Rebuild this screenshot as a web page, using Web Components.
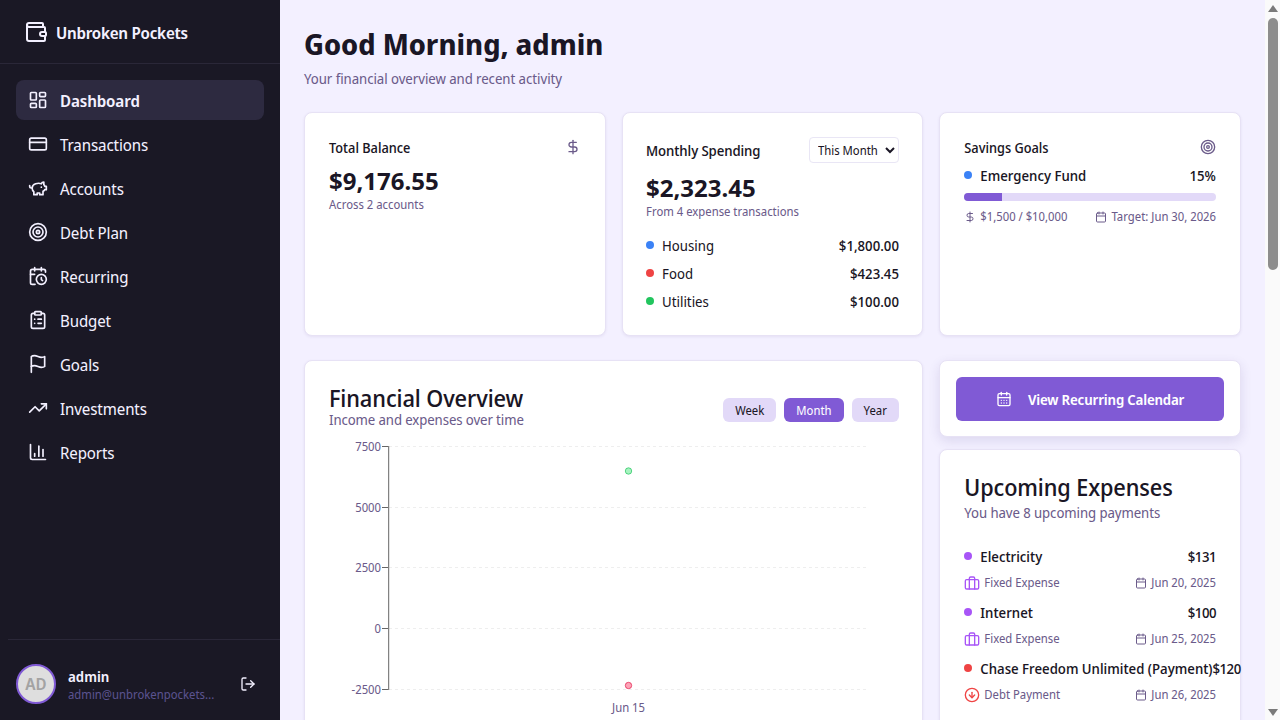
<!DOCTYPE html>
<html lang="en">
<head>
<meta charset="utf-8">
<title>Unbroken Pockets</title>
<style>
html, body { margin: 0; height: 100%; overflow: hidden; }
body { font-family: "Noto Sans Display", "Noto Sans", sans-serif; color: #1a1625; }
</style>
</head>
<body>
<app-shell>
  <side-bar slot="side">
    <nav-item icon="dashboard" active>Dashboard</nav-item>
    <nav-item icon="card">Transactions</nav-item>
    <nav-item icon="piggy">Accounts</nav-item>
    <nav-item icon="target">Debt Plan</nav-item>
    <nav-item icon="calclock">Recurring</nav-item>
    <nav-item icon="clipboard">Budget</nav-item>
    <nav-item icon="flag">Goals</nav-item>
    <nav-item icon="trend">Investments</nav-item>
    <nav-item icon="bars">Reports</nav-item>
  </side-bar>
  <dash-page>
    <balance-card slot="a"></balance-card>
    <spending-card slot="b"></spending-card>
    <savings-card slot="c"></savings-card>
    <overview-card slot="d"></overview-card>
    <calendar-card slot="e"></calendar-card>
    <upcoming-card slot="f">
      <expense-row name="Electricity" amount="$131" kind="Fixed Expense" date="Jun 20, 2025" color="#a855f7" icon="briefcase"></expense-row>
      <expense-row name="Internet" amount="$100" kind="Fixed Expense" date="Jun 25, 2025" color="#a855f7" icon="briefcase"></expense-row>
      <expense-row name="Chase Freedom Unlimited (Payment)" amount="$120" kind="Debt Payment" date="Jun 26, 2025" color="#ef4444" icon="arrowdown"></expense-row>
    </upcoming-card>
  </dash-page>
  <scroll-rail slot="rail"></scroll-rail>
</app-shell>

<script>
// lucide style icons, only the ones this page needs
const ICONS = {
  wallet: '<path d="M19 7V4a1 1 0 0 0-1-1H5a2 2 0 0 0 0 4h15a1 1 0 0 1 1 1v4h-3a2 2 0 0 0 0 4h3a1 1 0 0 0 1-1v-2a1 1 0 0 0-1-1"/><path d="M3 5v14a2 2 0 0 0 2 2h15a1 1 0 0 0 1-1v-4"/>',
  dashboard: '<rect x="3" y="3" width="7" height="9" rx="1"/><rect x="14" y="3" width="7" height="5" rx="1"/><rect x="14" y="12" width="7" height="9" rx="1"/><rect x="3" y="16" width="7" height="5" rx="1"/>',
  card: '<rect x="2" y="5" width="20" height="14" rx="2"/><path d="M2 10h20"/>',
  piggy: '<path d="M19 5c-1.5 0-2.8 1.4-3 2-3.5-1.5-11-.3-11 5 0 1.8 0 3 2 4.5V20h4v-2h3v2h4v-4c1-.5 1.7-1 2-2h2v-4h-2c0-1-.5-1.5-1-2V5z"/><path d="M2 9v1c0 1.1.9 2 2 2h1"/><path d="M16 11h.01"/>',
  target: '<circle cx="12" cy="12" r="10"/><circle cx="12" cy="12" r="6"/><circle cx="12" cy="12" r="2"/>',
  calclock: '<path d="M21 7.5V6a2 2 0 0 0-2-2H5a2 2 0 0 0-2 2v14a2 2 0 0 0 2 2h3.5"/><path d="M16 2v4"/><path d="M8 2v4"/><path d="M3 10h5"/><path d="M17.5 17.5 16 16.3V14"/><circle cx="16" cy="16" r="6"/>',
  clipboard: '<rect x="8" y="2" width="8" height="4" rx="1"/><path d="M16 4h2a2 2 0 0 1 2 2v14a2 2 0 0 1-2 2H6a2 2 0 0 1-2-2V6a2 2 0 0 1 2-2h2"/><path d="M12 11h4"/><path d="M12 16h4"/><path d="M8 11h.01"/><path d="M8 16h.01"/>',
  flag: '<path d="M4 15s1-1 4-1 5 2 8 2 4-1 4-1V3s-1 1-4 1-5-2-8-2-4 1-4 1z"/><path d="M4 22v-7"/>',
  trend: '<path d="M22 7l-8.5 8.5-5-5L2 17"/><path d="M16 7h6v6"/>',
  bars: '<path d="M3 3v16a2 2 0 0 0 2 2h16"/><path d="M18 17V9"/><path d="M13 17V5"/><path d="M8 17v-3"/>',
  logout: '<path d="M9 21H5a2 2 0 0 1-2-2V5a2 2 0 0 1 2-2h4"/><path d="M16 17l5-5-5-5"/><path d="M21 12H9"/>',
  dollar: '<path d="M12 2v20"/><path d="M17 5H9.5a3.5 3.5 0 0 0 0 7h5a3.5 3.5 0 0 1 0 7H6"/>',
  calendar: '<path d="M8 2v4"/><path d="M16 2v4"/><rect x="3" y="4" width="18" height="18" rx="2"/><path d="M3 10h18"/>',
  caldays: '<path d="M8 2v4"/><path d="M16 2v4"/><rect x="3" y="4" width="18" height="18" rx="2"/><path d="M3 10h18"/><path d="M8 14h.01"/><path d="M12 14h.01"/><path d="M16 14h.01"/><path d="M8 18h.01"/><path d="M12 18h.01"/><path d="M16 18h.01"/>',
  briefcase: '<path d="M16 21V5a2 2 0 0 0-2-2h-4a2 2 0 0 0-2 2v16"/><rect x="2" y="7" width="20" height="14" rx="2"/>',
  arrowdown: '<circle cx="12" cy="12" r="10"/><path d="M12 8v8"/><path d="M8 12l4 4 4-4"/>'
};

const FONT = '"Noto Sans Display", "Noto Sans", sans-serif';

class UiIcon extends HTMLElement {
  connectedCallback() {
    const size = this.getAttribute("size") || 20;
    const name = this.getAttribute("name");
    this.attachShadow({ mode: "open" }).innerHTML = `
      <style>:host { display: inline-flex; flex: none; width: ${size}px; height: ${size}px; } svg { display: block; }</style>
      <svg width="${size}" height="${size}" viewBox="0 0 24 24" fill="none" stroke="currentColor" stroke-width="2" stroke-linecap="round" stroke-linejoin="round">${ICONS[name]}</svg>`;
  }
}
customElements.define("ui-icon", UiIcon);

class AppShell extends HTMLElement {
  constructor() {
    super();
    this.attachShadow({ mode: "open" }).innerHTML = `
      <style>
        :host { display: flex; height: 100vh; overflow: hidden; }
        main { flex: 1; min-width: 0; overflow: hidden; background: #f3f0ff; }
      </style>
      <slot name="side"></slot>
      <main><slot></slot></main>
      <slot name="rail"></slot>`;
  }
}
customElements.define("app-shell", AppShell);

// the screenshot has the browser's scrollbar on it, headless hides the real one
class ScrollRail extends HTMLElement {
  constructor() {
    super();
    this.attachShadow({ mode: "open" }).innerHTML = `
      <style>
        :host { display: flex; flex-direction: column; align-items: center; flex: none; width: 15px; height: 100vh; background: #fafafa; }
        .arrow { flex: none; height: 16px; display: flex; align-items: center; justify-content: center; }
        .arrow svg { display: block; }
        .thumb { flex: none; width: 10px; height: 252px; margin-top: 2px; border-radius: 5px; background: #8d8d8d; }
        .gap { flex: 1; }
      </style>
      <div class="arrow"><svg width="10" height="7" viewBox="0 0 10 7"><path d="M5 0l5 7H0z" fill="#7a7a7a"/></svg></div>
      <div class="thumb"></div>
      <div class="gap"></div>
      <div class="arrow"><svg width="10" height="7" viewBox="0 0 10 7"><path d="M0 0h10L5 7z" fill="#7a7a7a"/></svg></div>`;
  }
}
customElements.define("scroll-rail", ScrollRail);

class SideBar extends HTMLElement {
  constructor() {
    super();
    this.attachShadow({ mode: "open" }).innerHTML = `
      <style>
        :host { display: flex; flex-direction: column; flex: none; width: 280px; height: 100vh; box-sizing: border-box; background: #1a1825; color: #f3f0ff; }
        .brand { display: flex; align-items: center; gap: 8px; height: 64px; box-sizing: border-box; padding: 0 24px; border-bottom: 1px solid #2a2738; font-size: 16px; font-weight: 600; letter-spacing: -.25px; flex: none; }
        .brand span { margin-top: 2px; }
        nav { flex: 1; display: flex; flex-direction: column; gap: 4px; padding: 16px; }
        .foot { margin-left: 8px; border-top: 1px solid #2a2738; height: 81px; box-sizing: border-box; padding: 8px 24px 0 8px; display: flex; align-items: center; gap: 12px; flex: none; }
        .avatar { width: 40px; height: 40px; box-sizing: border-box; border: 2px solid #805ad5; border-radius: 50%; background: #dedede; color: #a3a3a3; font-size: 16px; font-weight: 600; display: flex; align-items: center; justify-content: center; flex: none; }
        .who { flex: 1; min-width: 0; margin-top: 2px; }
        .name { font-size: 14px; font-weight: 600; line-height: 20px; color: #f3f0ff; }
        .mail { font-size: 12px; line-height: 16px; color: #5b5390; white-space: nowrap; overflow: hidden; text-overflow: ellipsis; width: 148px; }
      </style>
      <div class="brand"><ui-icon name="wallet" size="24"></ui-icon><span>Unbroken Pockets</span></div>
      <nav><slot></slot></nav>
      <div class="foot">
        <div class="avatar">AD</div>
        <div class="who"><div class="name">admin</div><div class="mail">admin@unbrokenpockets.com</div></div>
        <ui-icon name="logout" size="16"></ui-icon>
      </div>`;
  }
}
customElements.define("side-bar", SideBar);

class NavItem extends HTMLElement {
  connectedCallback() {
    this.attachShadow({ mode: "open" }).innerHTML = `
      <style>
        :host { display: flex; align-items: center; gap: 12px; box-sizing: border-box; height: 40px; padding: 2px 12px 0; border-radius: 8px; font-size: 16px; letter-spacing: -.12px; color: #f3f0ff; }
        :host([active]) { background: #2d2a40; font-weight: 600; }
        ui-icon { margin-top: -2px; }
      </style>
      <ui-icon name="${this.getAttribute("icon")}" size="20"></ui-icon><slot></slot>`;
  }
}
customElements.define("nav-item", NavItem);

class DashPage extends HTMLElement {
  constructor() {
    super();
    this.attachShadow({ mode: "open" }).innerHTML = `
      <style>
        :host { display: block; padding: 24px; }
        h1 { margin: 0; font-size: 29px; line-height: 40px; font-weight: 700; color: #1a1625; }
        p { margin: 5px 0 0; font-size: 14px; line-height: 20px; letter-spacing: -.05px; color: #6b5b8a; }
        .top { display: grid; grid-template-columns: repeat(3, minmax(0, 1fr)); gap: 16px; margin-top: 23px; height: 224px; }
        .bottom { display: grid; grid-template-columns: repeat(3, minmax(0, 1fr)); gap: 16px; margin-top: 24px; align-items: start; }
        .wide { grid-column: span 2; }
        .stack { display: flex; flex-direction: column; gap: 12px; }
      </style>
      <h1>Good Morning, admin</h1>
      <p>Your financial overview and recent activity</p>
      <div class="top">
        <slot name="a"></slot><slot name="b"></slot><slot name="c"></slot>
      </div>
      <div class="bottom">
        <div class="wide"><slot name="d"></slot></div>
        <div class="stack"><slot name="e"></slot><slot name="f"></slot></div>
      </div>`;
  }
}
customElements.define("dash-page", DashPage);

// shared look of every white card
const CARD_CSS = `
  :host { display: block; box-sizing: border-box; background: #fff; border: 1px solid #e7e2f5; border-radius: 8px; box-shadow: 0 1px 3px rgba(60,40,120,.08); padding: 24px; color: #1a1625; }
  .muted { color: #6b5b8a; }
  .label { font-size: 13.5px; font-weight: 500; padding-top: 2px; }
  .amount { font-family: "Noto Sans", sans-serif; font-size: 24px; font-weight: 700; line-height: 32px; }
  .sub { font-size: 12px; line-height: 16px; color: #6b5b8a; }
  .dot { width: 8px; height: 8px; border-radius: 50%; flex: none; }
`;

class BalanceCard extends HTMLElement {
  constructor() {
    super();
    this.attachShadow({ mode: "open" }).innerHTML = `
      <style>${CARD_CSS}
        .head { display: flex; justify-content: space-between; align-items: center; height: 20px; margin-bottom: 8px; }
      </style>
      <div class="head"><span class="label">Total Balance</span><ui-icon class="muted" name="dollar" size="16"></ui-icon></div>
      <div class="amount">$9,176.55</div>
      <div class="sub">Across 2 accounts</div>`;
  }
}
customElements.define("balance-card", BalanceCard);

class SpendingCard extends HTMLElement {
  constructor() {
    super();
    this.attachShadow({ mode: "open" }).innerHTML = `
      <style>${CARD_CSS}
        :host { padding: 24px 23.4px; }
        .head { display: flex; justify-content: space-between; align-items: center; height: 26px; margin-bottom: 9px; }
        .label { font-size: 14px; letter-spacing: -.1px; padding-top: 0; }
        select { width: 90px; height: 26px; font: 12px ${FONT}; color: #1a1625; background: #fff; border: 1px solid #e9e6f5; border-radius: 4px; padding: 0 4px; }
        .rows { margin-top: 15px; display: flex; flex-direction: column; gap: 8px; }
        .row { display: flex; align-items: center; height: 20px; font-size: 14px; }
        .row .dot { margin-right: 8px; }
        .row b { margin-left: auto; font-weight: 500; }
      </style>
      <div class="head"><span class="label">Monthly Spending</span>
        <select><option>This Month</option></select></div>
      <div class="amount">$2,323.45</div>
      <div class="sub">From 4 expense transactions</div>
      <div class="rows">
        <div class="row"><span class="dot" style="background:#3b82f6"></span>Housing<b>$1,800.00</b></div>
        <div class="row"><span class="dot" style="background:#ef4444"></span>Food<b>$423.45</b></div>
        <div class="row"><span class="dot" style="background:#22c55e"></span>Utilities<b>$100.00</b></div>
      </div>`;
  }
}
customElements.define("spending-card", SpendingCard);

class SavingsCard extends HTMLElement {
  constructor() {
    super();
    this.attachShadow({ mode: "open" }).innerHTML = `
      <style>${CARD_CSS}
        .head { display: flex; justify-content: space-between; align-items: center; height: 20px; margin-bottom: 8px; }
        .row { display: flex; align-items: center; height: 20px; font-size: 14px; font-weight: 500; }
        .row .dot { margin-right: 8px; }
        .row span:last-child { margin-left: auto; }
        .track { height: 8px; border-radius: 4px; background: #e2d9f8; margin-top: 8px; overflow: hidden; }
        .fill { width: 15%; height: 100%; background: #805ad5; }
        .meta { display: flex; justify-content: space-between; margin-top: 8px; }
        .meta div { display: flex; align-items: center; gap: 4px; font-size: 12px; line-height: 16px; color: #6b5b8a; }
      </style>
      <div class="head"><span class="label">Savings Goals</span><ui-icon class="muted" name="target" size="16"></ui-icon></div>
      <div class="row"><span class="dot" style="background:#3b82f6"></span><span>Emergency Fund</span><span>15%</span></div>
      <div class="track"><div class="fill"></div></div>
      <div class="meta">
        <div><ui-icon name="dollar" size="12"></ui-icon>$1,500 / $10,000</div>
        <div><ui-icon name="calendar" size="12"></ui-icon>Target: Jun 30, 2026</div>
      </div>`;
  }
}
customElements.define("savings-card", SavingsCard);

class OverviewCard extends HTMLElement {
  constructor() {
    super();
    const ticks = [["7500", 10.5], ["5000", 71.5], ["2500", 131.5], ["0", 192.5], ["-2500", 253.5]];
    const rows = ticks.map(([t, y]) => `
      <line x1="60" x2="537" y1="${y}" y2="${y}" stroke="#eeeeee" stroke-dasharray="3 3"/>
      <line x1="53" x2="59" y1="${y}" y2="${y}" stroke="#666"/>
      <text x="52" y="${y + 4}" text-anchor="end">${t}</text>`).join("");
    this.attachShadow({ mode: "open" }).innerHTML = `
      <style>${CARD_CSS}
        :host { height: 640px; }
        .head { display: flex; justify-content: space-between; align-items: flex-end; height: 43px; margin-top: 1px; }
        h2 { margin: 0; font-size: 23px; line-height: 26px; font-weight: 500; letter-spacing: -.1px; }
        .desc { font-size: 14px; line-height: 18px; letter-spacing: -.1px; color: #6b5b8a; }
        .btns { display: flex; gap: 8px; margin-bottom: 7px; margin-right: -.6px; }
        button { height: 24px; padding: 0 12px; border: 0; border-radius: 6px; background: #e2d9f8; color: #1a1625; font: 12px ${FONT}; }
        button.on { background: #805ad5; color: #fff; }
        svg { display: block; margin-top: 7px; }
        text { font: 12px ${FONT}; fill: #6b5b8a; }
      </style>
      <div class="head">
        <div><h2>Financial Overview</h2><div class="desc">Income and expenses over time</div></div>
        <div class="btns"><button>Week</button><button class="on">Month</button><button>Year</button></div>
      </div>
      <svg width="569" height="284" viewBox="0 0 569 284">
        ${rows}
        <line x1="59.7" x2="59.7" y1="10" y2="254" stroke="#666"/>
        <circle cx="299.5" cy="35" r="3.2" fill="#a7f3c0" stroke="#22c55e" stroke-opacity=".7"/>
        <circle cx="299.5" cy="249.5" r="3.2" fill="#fda4b8" stroke="#e11d48" stroke-opacity=".7"/>
        <text x="299.5" y="276" text-anchor="middle">Jun 15</text>
      </svg>`;
  }
}
customElements.define("overview-card", OverviewCard);

class CalendarCard extends HTMLElement {
  constructor() {
    super();
    this.attachShadow({ mode: "open" }).innerHTML = `
      <style>${CARD_CSS}
        :host { padding: 16px 16px 15px; box-shadow: 0 4px 12px rgba(60,40,120,.12); }
        .btn { display: flex; align-items: center; justify-content: center; gap: 16px; height: 44px; border-radius: 6px; background: #805ad5; color: #fff; font-size: 14px; font-weight: 600; letter-spacing: -.17px; }
      </style>
      <div class="btn"><ui-icon name="caldays" size="16"></ui-icon><span>View Recurring Calendar</span></div>`;
  }
}
customElements.define("calendar-card", CalendarCard);

class UpcomingCard extends HTMLElement {
  constructor() {
    super();
    this.attachShadow({ mode: "open" }).innerHTML = `
      <style>${CARD_CSS}
        :host { height: 700px; }
        h2 { margin: -1px 0 0; font-size: 23px; line-height: 28px; font-weight: 500; letter-spacing: -.1px; }
        .desc { font-size: 14px; line-height: 20px; letter-spacing: -.08px; color: #6b5b8a; margin-top: 2px; }
        .list { margin-top: 23px; }
      </style>
      <h2>Upcoming Expenses</h2>
      <div class="desc">You have 8 upcoming payments</div>
      <div class="list"><slot></slot></div>`;
  }
}
customElements.define("upcoming-card", UpcomingCard);

class ExpenseRow extends HTMLElement {
  connectedCallback() {
    const a = (n) => this.getAttribute(n);
    this.attachShadow({ mode: "open" }).innerHTML = `
      <style>
        :host { display: block; height: 56px; }
        .line { display: flex; align-items: center; height: 20px; font-size: 14px; font-weight: 500; white-space: nowrap; color: #1a1625; }
        .dot { width: 8px; height: 8px; border-radius: 50%; margin-right: 8px; flex: none; }
        .amt { margin-left: auto; flex: none; letter-spacing: -.5px; }
        .meta { display: flex; justify-content: space-between; align-items: center; margin-top: 8px; font-size: 12px; line-height: 18px; color: #6b5b8a; }
        .kind, .when { display: flex; align-items: center; gap: 4px; }
      </style>
      <div class="line"><span class="dot" style="background:${a("color")}"></span><span>${a("name")}</span><span class="amt">${a("amount")}</span></div>
      <div class="meta">
        <span class="kind"><ui-icon name="${a("icon")}" size="16" style="color:${a("color")}"></ui-icon>${a("kind")}</span>
        <span class="when"><ui-icon name="calendar" size="12"></ui-icon>${a("date")}</span>
      </div>`;
  }
}
customElements.define("expense-row", ExpenseRow);
</script>
</body>
</html>
